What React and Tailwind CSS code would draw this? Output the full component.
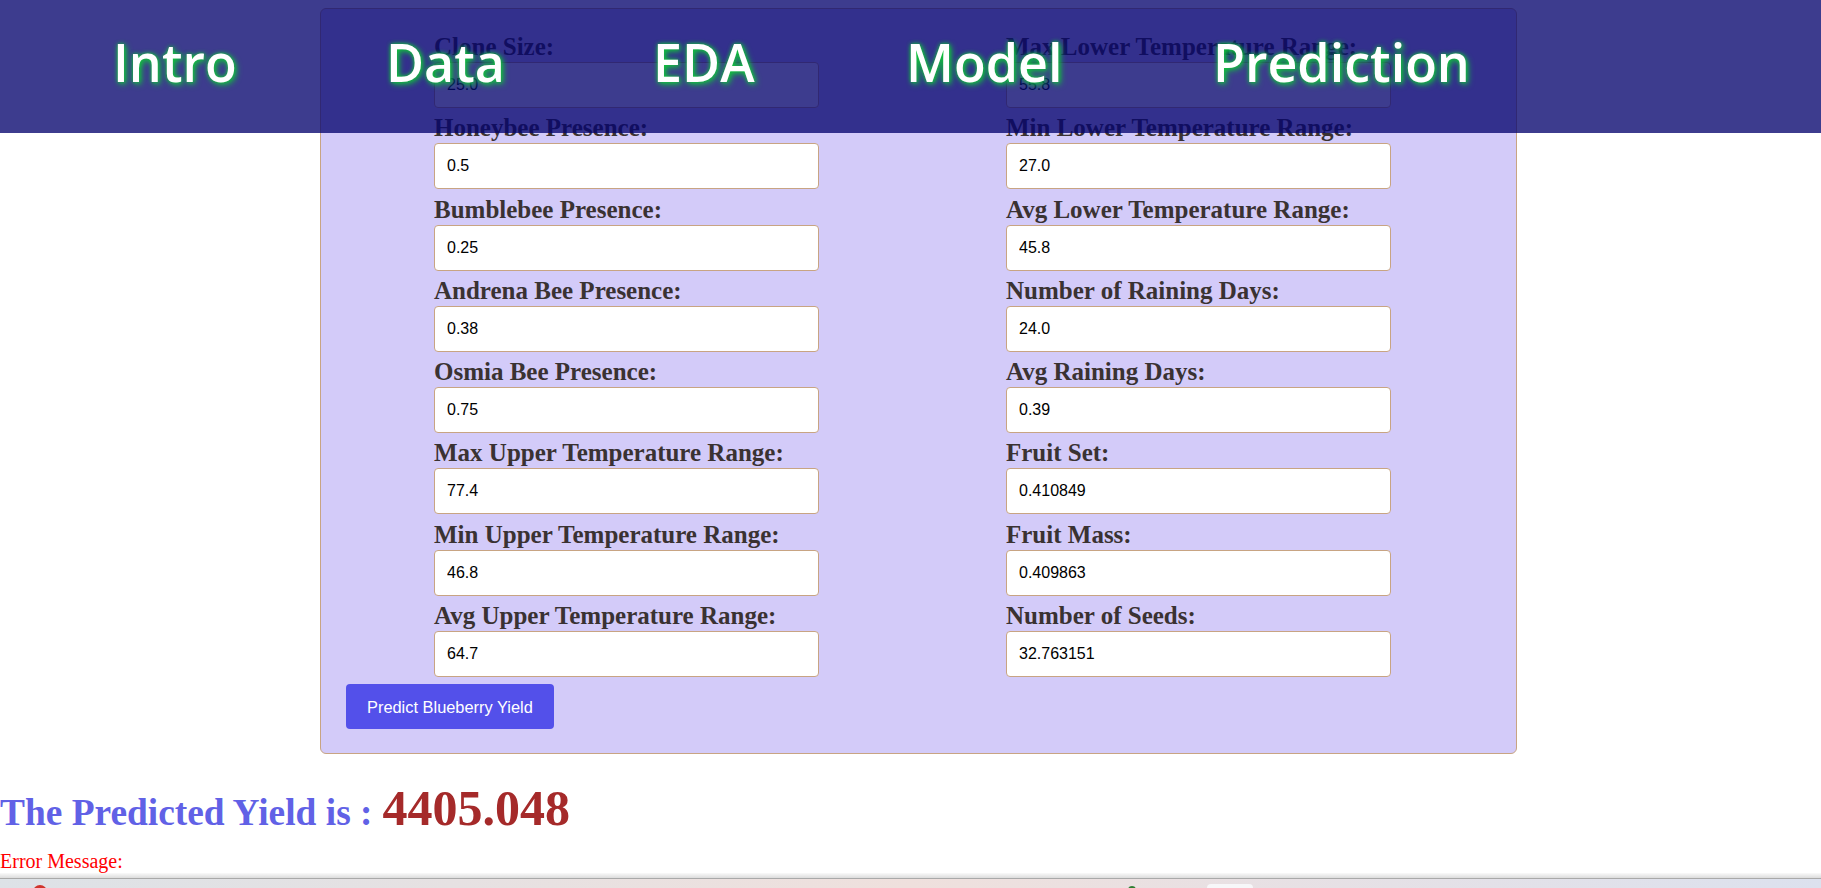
import React from "react";

const left = [
  ["Clone Size:", "25.0"],
  ["Honeybee Presence:", "0.5"],
  ["Bumblebee Presence:", "0.25"],
  ["Andrena Bee Presence:", "0.38"],
  ["Osmia Bee Presence:", "0.75"],
  ["Max Upper Temperature Range:", "77.4"],
  ["Min Upper Temperature Range:", "46.8"],
  ["Avg Upper Temperature Range:", "64.7"],
];

const right = [
  ["Max Lower Temperature Range:", "55.8"],
  ["Min Lower Temperature Range:", "27.0"],
  ["Avg Lower Temperature Range:", "45.8"],
  ["Number of Raining Days:", "24.0"],
  ["Avg Raining Days:", "0.39"],
  ["Fruit Set:", "0.410849"],
  ["Fruit Mass:", "0.409863"],
  ["Number of Seeds:", "32.763151"],
];

function Field({ label, value }) {
  return (
    <div className="mb-[6.3px]">
      <label className="block h-[28px] text-[25px] leading-[28px] font-bold whitespace-nowrap text-[#3a3232] [font-family:'Liberation_Serif',serif]">
        {label}
      </label>
      <input
        readOnly
        value={value}
        className="mt-px block h-[46px] w-[385px] rounded-[4px] border border-[#c8a483] bg-white px-3 text-[16px] text-black outline-none [font-family:'Liberation_Sans',Arial,sans-serif]"
      />
    </div>
  );
}

const navItems = [
  ["Intro", "ml-[113px] w-[117px]"],
  ["Data", "ml-[156px] w-[111px]"],
  ["EDA", "ml-[156px] w-[100px]"],
  ["Model", "ml-[153px] w-[153px]"],
  ["Prediction", "ml-[154px] w-[254px]"],
];

export default function App() {
  return (
    <div className="relative flex h-[888px] w-full flex-col overflow-hidden bg-white">
      {/* overlay navigation */}
      <nav className="absolute left-0 top-0 z-10 flex h-[133px] w-full bg-[rgba(5,4,110,0.775)] pt-[36px]">
        {navItems.map(([t, cls]) => (
          <div
            key={t}
            className={`${cls} shrink-0 whitespace-nowrap text-center text-[52px] leading-none font-semibold text-white [font-family:'Open_Sans',sans-serif] [text-shadow:2px_2px_6px_#0fc838,0_0_4px_#0fc838]`}
          >
            {t}
          </div>
        ))}
      </nav>

      {/* form panel */}
      <div className="ml-[320px] mt-[8px] w-[1197px] shrink-0 rounded-[6px] border border-[#c8a483] bg-[#d3cbf9] p-6">
        <div className="flex">
          <div className="ml-[89px] w-[385px]">
            {left.map(([l, v]) => (
              <Field key={l} label={l} value={v} />
            ))}
          </div>
          <div className="ml-[187px] w-[385px]">
            {right.map(([l, v]) => (
              <Field key={l} label={l} value={v} />
            ))}
          </div>
        </div>
        <button className="ml-px mt-px h-[45px] rounded-[4px] bg-[#5350ea] px-[21px] text-[16.4px] text-white [font-family:'Liberation_Sans',Arial,sans-serif]">
          Predict Blueberry Yield
        </button>
      </div>

      {/* result */}
      <div className="mt-[29px] flex shrink-0 items-baseline gap-[10px] font-bold leading-none [font-family:'Liberation_Serif',serif]">
        <span className="text-[37.4px] text-[#6161e6]">The Predicted Yield is :</span>
        <span className="text-[50px] text-[#a52a2a]">4405.048</span>
      </div>
      <div className="mt-[18px] shrink-0 text-[20px] leading-none text-[#ff0000] [font-family:'Liberation_Serif',serif]">
        Error Message:
      </div>

      {/* bottom window edge + taskbar */}
      <div className="mt-auto shrink-0">
        <div className="h-[5px] bg-gradient-to-b from-[#fafafa] to-[#dcdcdc]" />
        <div className="h-px bg-[#a9a9a9]" />
        <div className="flex h-[9px] overflow-hidden bg-gradient-to-r from-[#dde2e7] via-[#efe0dd] to-[#dce1ee]">
          <div className="ml-[33px] mt-[6px] h-[14px] w-[14px] shrink-0 rounded-full bg-[#d0342c]" />
          <div className="ml-[1081px] mt-[7px] h-[8px] w-[8px] shrink-0 rounded-sm bg-[#2e7d32]" />
          <div className="ml-[71px] mt-[5px] h-[20px] w-[46px] shrink-0 rounded-[4px] bg-[#f7f7f9]" />
        </div>
      </div>
    </div>
  );
}
